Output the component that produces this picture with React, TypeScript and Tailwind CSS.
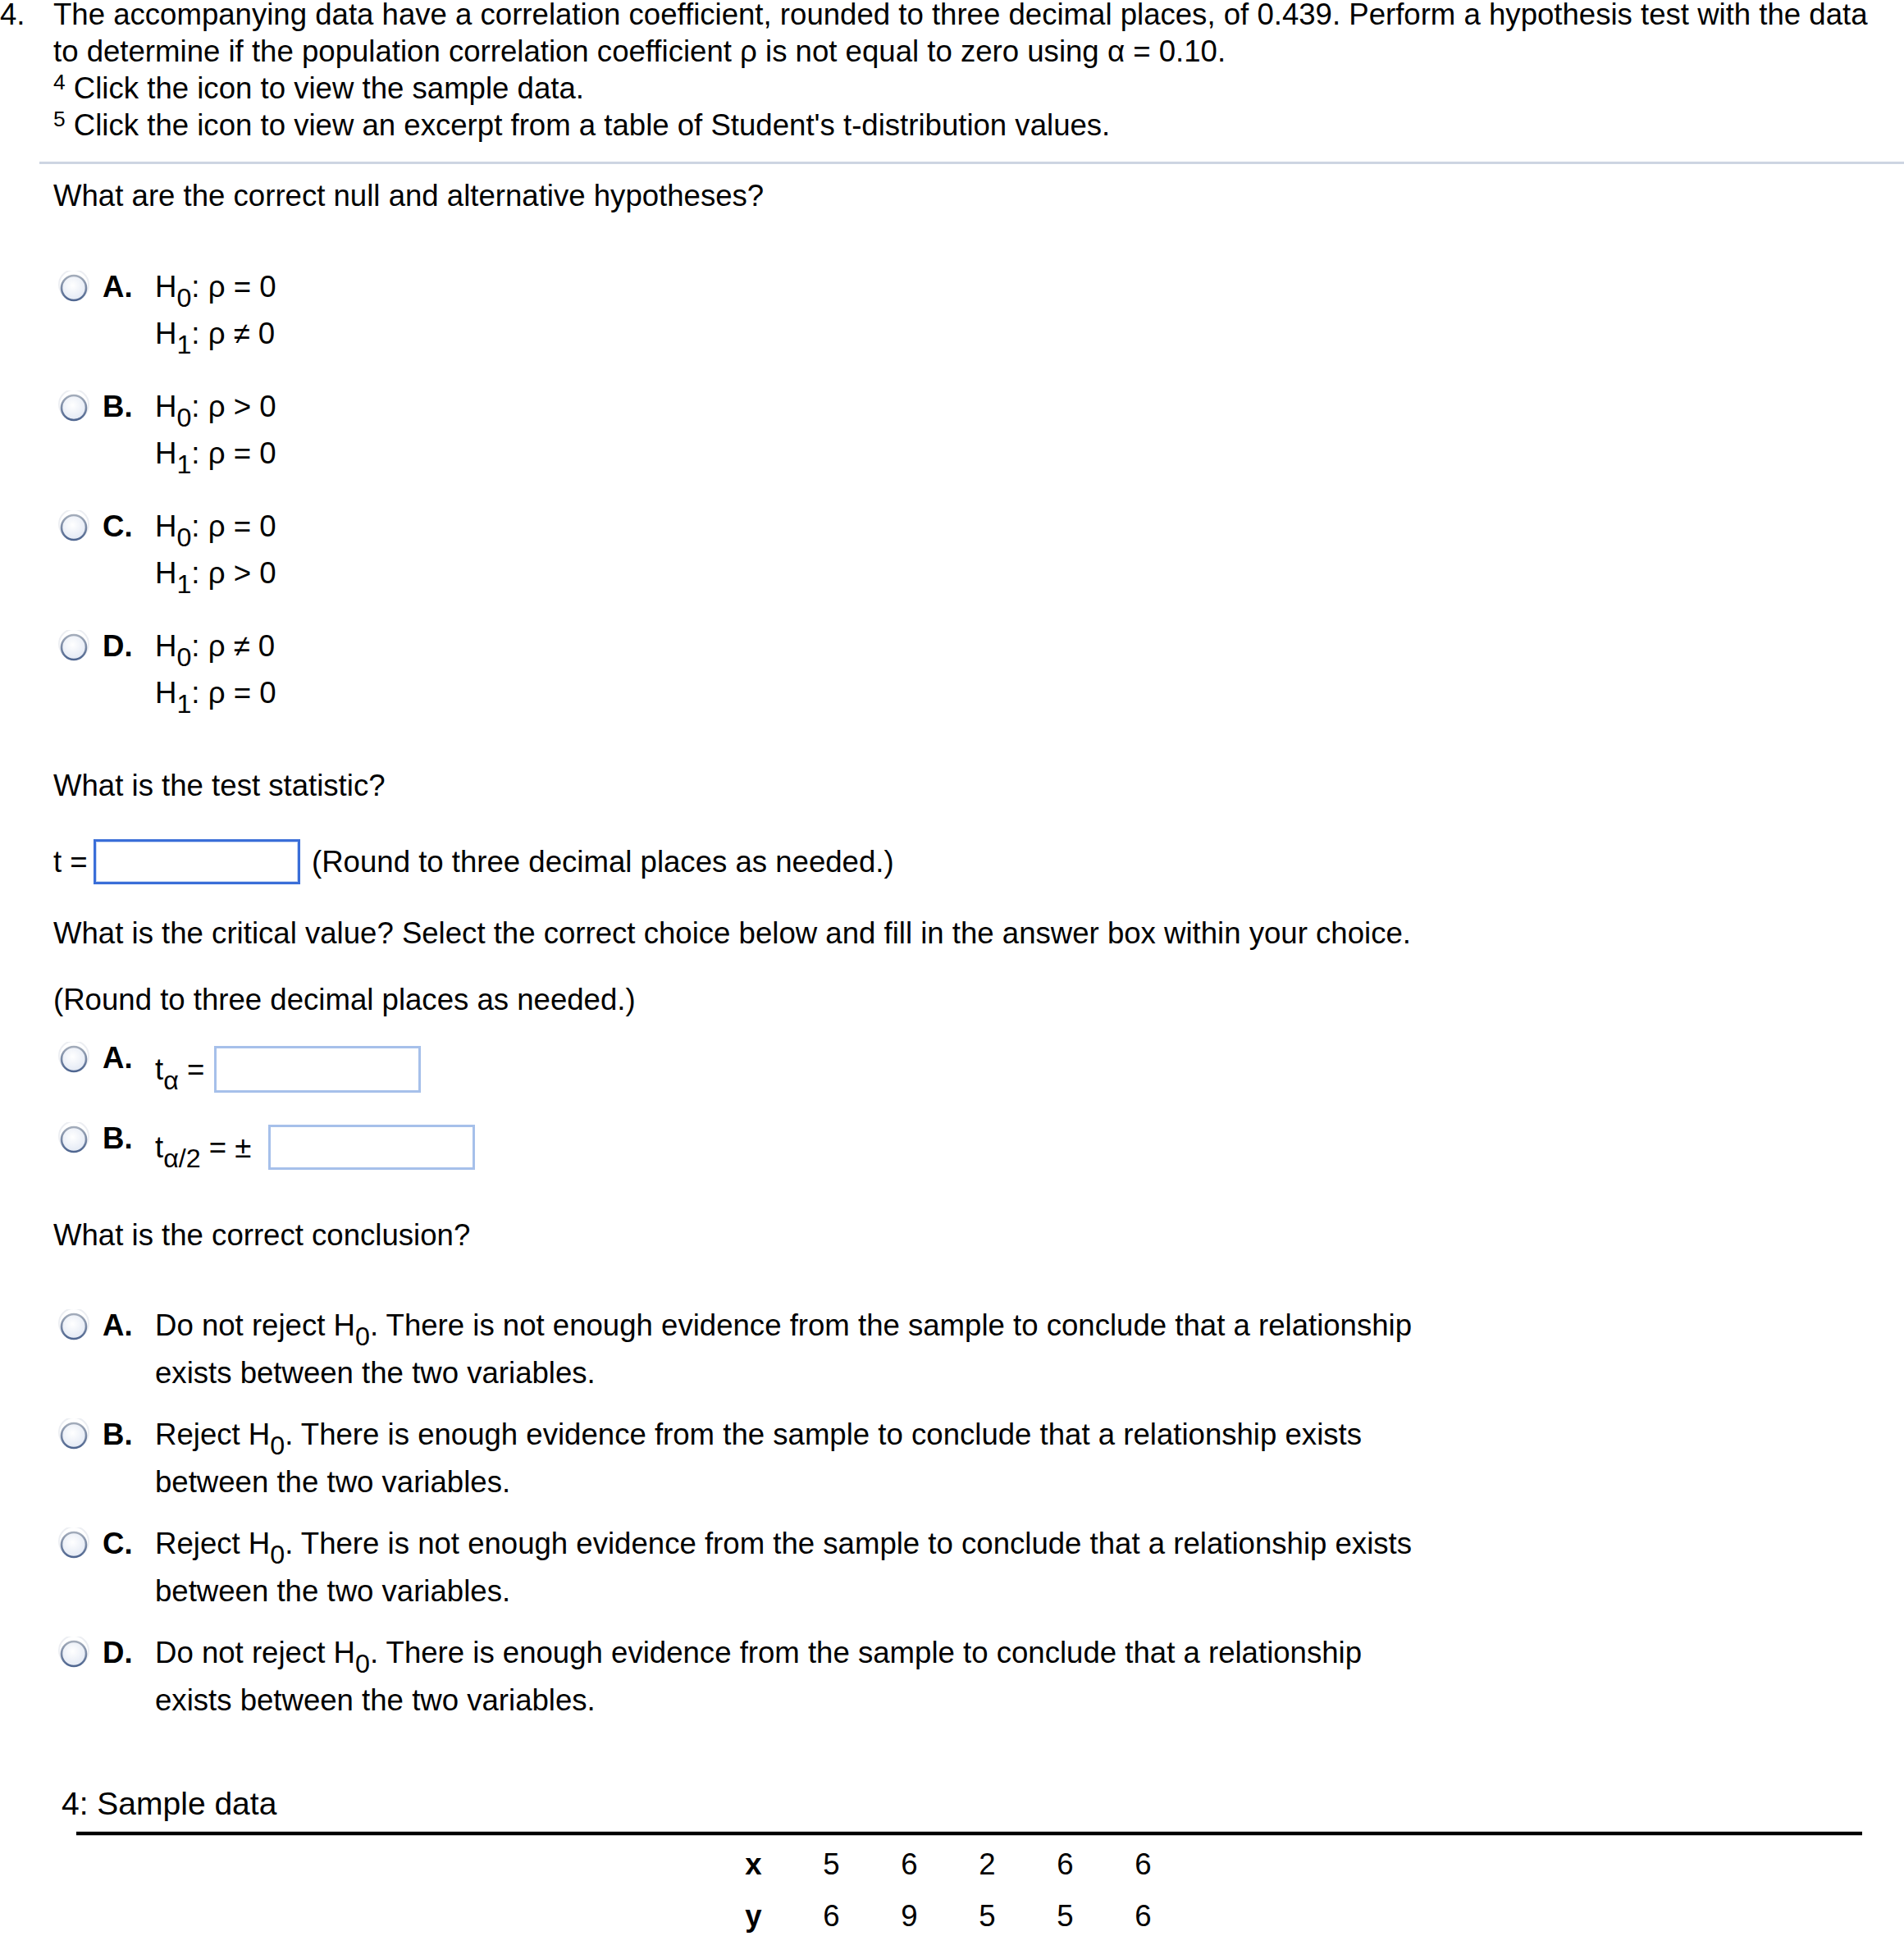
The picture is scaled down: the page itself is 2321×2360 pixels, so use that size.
import React from "react";

function Radio() {
  return (
    <svg width="40" height="40" viewBox="0 0 40 40" className="shrink-0">
      <defs>
        <radialGradient id="radioFill" cx="45%" cy="40%" r="60%">
          <stop offset="0%" stopColor="#ffffff" />
          <stop offset="100%" stopColor="#e3e9f4" />
        </radialGradient>
        <linearGradient id="radioRing" x1="0" y1="0" x2="0" y2="1">
          <stop offset="0%" stopColor="#a3acba" />
          <stop offset="100%" stopColor="#4f6690" />
        </linearGradient>
      </defs>
      <circle cx="20" cy="17" r="18" fill="none" stroke="#eceef2" strokeWidth="2" />
      <circle cx="20" cy="21" r="15" fill="url(#radioFill)" stroke="url(#radioRing)" strokeWidth="2.6" />
    </svg>
  );
}

function Sub({ children }: { children: React.ReactNode }) {
  return <sub className="relative bottom-[-0.38em] align-baseline text-[0.88em]">{children}</sub>;
}

function Hyp({ letter, h0, h1 }: { letter: string; h0: string; h1: string }) {
  return (
    <div className="flex items-start">
      <div className="flex h-[57px] w-[125px] items-center pl-[70px]">
        <Radio />
      </div>
      <div className="w-[64px] font-bold leading-[57px]">{letter}.</div>
      <div className="leading-[57px]">
        <div>
          H<Sub>0</Sub>: ρ {h0} 0
        </div>
        <div>
          H<Sub>1</Sub>: ρ {h1} 0
        </div>
      </div>
    </div>
  );
}

function Conclusion({ letter, children }: { letter: string; children: React.ReactNode }) {
  return (
    <div className="flex items-start">
      <div className="flex h-[58px] w-[125px] items-center pl-[70px]">
        <Radio />
      </div>
      <div className="w-[64px] font-bold leading-[58px]">{letter}.</div>
      <div className="leading-[58px]">{children}</div>
    </div>
  );
}

export default function App() {
  const xs = [5, 6, 2, 6, 6];
  const ys = [6, 9, 5, 5, 6];

  return (
    <div className="min-h-[2360px] w-[2321px] bg-white font-['Liberation_Sans',Arial,sans-serif] text-[36.6px] leading-[45px] text-black">
      {/* Question header */}
      <div className="-mt-[5px] flex">
        <div className="w-[65px]">4.</div>
        <div>
          <div>
            The accompanying data have a correlation coefficient, rounded to three decimal places, of 0.439. Perform a
            hypothesis test with the data
          </div>
          <div>to determine if the population correlation coefficient ρ is not equal to zero using α = 0.10.</div>
          <div>
            <sup className="relative top-[-0.42em] align-baseline text-[0.72em]">4</sup> Click the icon to view the sample
            data.
          </div>
          <div>
            <sup className="relative top-[-0.42em] align-baseline text-[0.72em]">5</sup> Click the icon to view an excerpt
            from a table of Student's t-distribution values.
          </div>
        </div>
      </div>

      <div className="ml-[48px] mt-[22px] h-[3px] bg-[#cdd5e2]" />

      <div className="ml-[65px] mt-[16px]">What are the correct null and alternative hypotheses?</div>

      <div className="mt-[60px] flex flex-col gap-[32px]">
        <Hyp letter="A" h0="=" h1="≠" />
        <Hyp letter="B" h0=">" h1="=" />
        <Hyp letter="C" h0="=" h1=">" />
        <Hyp letter="D" h0="≠" h1="=" />
      </div>

      <div className="ml-[65px] mt-[62px]">What is the test statistic?</div>

      <div className="ml-[65px] mt-[43px] flex items-center">
        <span className="w-[49px]">t =</span>
        <div className="h-[55px] w-[252px] border-[3px] border-[#3a6ed8] shadow-[inset_0_0_0_1px_#c9d8f3]" />
        <span className="ml-[14px]">(Round to three decimal places as needed.)</span>
      </div>

      <div className="ml-[65px] mt-[37px]">
        What is the critical value? Select the correct choice below and fill in the answer box within your choice.
      </div>

      <div className="ml-[65px] mt-[36px]">(Round to three decimal places as needed.)</div>

      <div className="mt-[34px] flex items-start">
        <div className="flex h-[30px] w-[125px] items-center pl-[70px]">
          <Radio />
        </div>
        <div className="w-[64px] font-bold leading-[30px]">A.</div>
        <div className="flex items-center">
          <span className="leading-[50px]">
            t<Sub>α</Sub> =
          </span>
          <div className="ml-[12px] h-[57px] w-[252px] border-[3px] border-[#a6c0ea]" />
        </div>
      </div>

      <div className="mt-[39px] flex items-start">
        <div className="flex h-[34px] w-[125px] items-center pl-[70px]">
          <Radio />
        </div>
        <div className="w-[64px] font-bold leading-[34px]">B.</div>
        <div className="flex items-center">
          <span className="leading-[50px]">
            t<Sub>α/2</Sub> = ±
          </span>
          <div className="ml-[21px] h-[55px] w-[252px] border-[3px] border-[#a6c0ea]" />
        </div>
      </div>

      <div className="ml-[65px] mt-[57px]">What is the correct conclusion?</div>

      <div className="mt-[59px] flex flex-col gap-[17px]">
        <Conclusion letter="A">
          Do not reject H<Sub>0</Sub>. There is not enough evidence from the sample to conclude that a relationship
          <br />
          exists between the two variables.
        </Conclusion>
        <Conclusion letter="B">
          Reject H<Sub>0</Sub>. There is enough evidence from the sample to conclude that a relationship exists
          <br />
          between the two variables.
        </Conclusion>
        <Conclusion letter="C">
          Reject H<Sub>0</Sub>. There is not enough evidence from the sample to conclude that a relationship exists
          <br />
          between the two variables.
        </Conclusion>
        <Conclusion letter="D">
          Do not reject H<Sub>0</Sub>. There is enough evidence from the sample to conclude that a relationship
          <br />
          exists between the two variables.
        </Conclusion>
      </div>

      {/* Sample data */}
      <div className="ml-[75px] mt-[74px] text-[39px]">4: Sample data</div>
      <div className="ml-[93px] mr-[51px] mt-[11px] border-y border-[#c8c8c8]">
        <div className="h-[4px] bg-black" />
      </div>
      <div className="ml-[871px] mt-[3px]">
        <div className="flex h-[63px] items-center">
          <div className="w-[95px] text-center font-bold">x</div>
          {xs.map((v, i) => (
            <div key={i} className="w-[95px] text-center">
              {v}
            </div>
          ))}
        </div>
        <div className="flex h-[63px] items-center">
          <div className="w-[95px] text-center font-bold">y</div>
          {ys.map((v, i) => (
            <div key={i} className="w-[95px] text-center">
              {v}
            </div>
          ))}
        </div>
      </div>
    </div>
  );
}
